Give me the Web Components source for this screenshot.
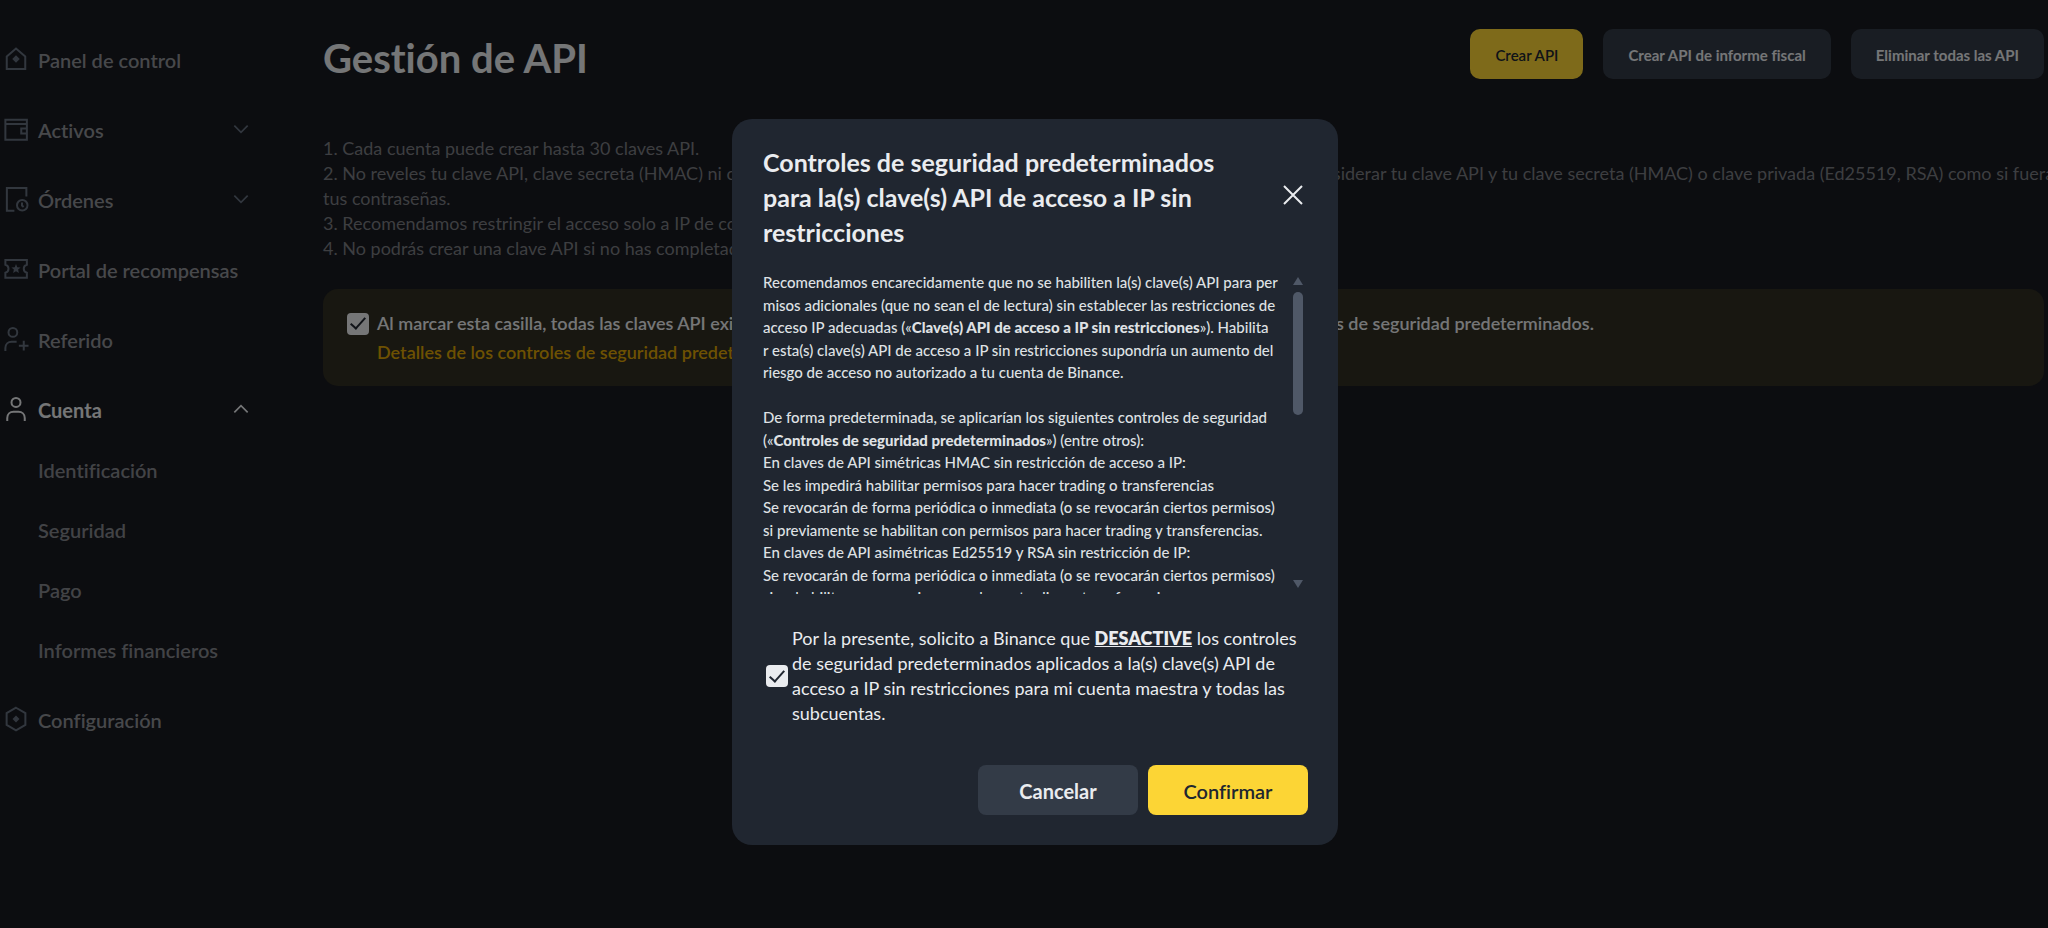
<!DOCTYPE html>
<html lang="es">
<head>
<meta charset="utf-8">
<meta name="viewport" content="width=device-width, initial-scale=1">
<title>Gestión de API</title>
<style>
    html, body {
        margin: 0;
        min-height: 100vh;
        background: #181a20;
        color: #eaecef;
        font-family: Lato, "Liberation Sans", sans-serif;
        font-variant-ligatures: none;
        overflow: hidden;
    }
    b { font-weight: 900; }
</style>
</head>
<body>
<api-page>
    <side-nav slot="nav">
        <nav-item icon="home">Panel de control</nav-item>
        <nav-item icon="wallet" arrow="down">Activos</nav-item>
        <nav-item icon="orders" arrow="down">Órdenes</nav-item>
        <nav-item icon="ticket">Portal de recompensas</nav-item>
        <nav-item icon="referral">Referido</nav-item>
        <nav-item icon="account" arrow="up" active>Cuenta
            <nav-item slot="sub" sub>Identificación</nav-item>
            <nav-item slot="sub" sub>Seguridad</nav-item>
            <nav-item slot="sub" sub>Pago</nav-item>
            <nav-item slot="sub" sub>Informes financieros</nav-item>
        </nav-item>
        <nav-item icon="settings">Configuración</nav-item>
    </side-nav>
    <page-header>Gestión de API
        <ui-button slot="actions" primary>Crear API</ui-button>
        <ui-button slot="actions">Crear API de informe fiscal</ui-button>
        <ui-button slot="actions">Eliminar todas las API</ui-button>
    </page-header>
    <api-notes></api-notes>
    <notice-banner>
        <check-field>Al marcar esta casilla, todas las claves API existentes y futuras de esta cuenta estarán siempre sujetas a todos los controles de seguridad predeterminados.</check-field>
        <a slot="link" href="#detalles">Detalles de los controles de seguridad predeterminados</a>
    </notice-banner>
</api-page>

<security-modal opened>
    <span slot="title">Controles de seguridad predeterminados<br>para la(s) clave(s) API de acceso a IP sin<br>restricciones</span>
    <scroll-box>
        Recomendamos encarecidamente que no se habiliten la(s) clave(s) API para per<br>
        misos adicionales (que no sean el de lectura) sin establecer las restricciones de<br>
        acceso IP adecuadas («<b>Clave(s) API de acceso a IP sin restricciones</b>»). Habilita<br>
        r esta(s) clave(s) API de acceso a IP sin restricciones supondría un aumento del<br>
        riesgo de acceso no autorizado a tu cuenta de Binance.<br>
        <br>
        De forma predeterminada, se aplicarían los siguientes controles de seguridad<br>
        («<b>Controles de seguridad predeterminados</b>») (entre otros):<br>
        En claves de API simétricas HMAC sin restricción de acceso a IP:<br>
        Se les impedirá habilitar permisos para hacer trading o transferencias<br>
        Se revocarán de forma periódica o inmediata (o se revocarán ciertos permisos)<br>
        si previamente se habilitan con permisos para hacer trading y transferencias.<br>
        En claves de API asimétricas Ed25519 y RSA sin restricción de IP:<br>
        Se revocarán de forma periódica o inmediata (o se revocarán ciertos permisos)<br>
        si se habilitan con permisos para hacer trading o transferencias.
    </scroll-box>
</security-modal>

<script>
const ICONS = {
    home: '<path d="M4.6 10 12 3.600l7.400 6.400V20H4.600z"/><path class="fill" d="m12 9 3 3-3 3-3-3z"/>',
    wallet: '<path d="M3.5 4.5h17.200v16H3.500zM3.500 8h17.200M20.700 11.500h-4.500v4h4.500"/>',
    orders: '<path d="M20.300 10V3.200H4.700v18.200h6"/><circle cx="17" cy="17" r="4.200"/><path d="M16.800 14.700v2.500l1.300 1.200"/>',
    ticket: '<path d="M3.500 4.800h17.200v3.800a3.300 3.300 0 0 0 0 6.400v4H3.500v-4a3.300 3.300 0 0 0 0-6.400z"/><path class="fill" d="m12 8 1 2.500 2.700.2-2 1.700.6 2.700-2.300-1.400-2.300 1.400.6-2.700-2-1.700 2.700-.2z"/>',
    referral: '<circle cx="9.500" cy="6.700" r="3.500"/><path d="M3.500 21.500v-2.300c0-3 2.200-5 5-5h4M14.300 17.300h7.700M18.200 13.400v7.800"/>',
    account: '<circle cx="12" cy="6.700" r="3.600"/><path d="M5 21.500v-2.300c0-3 2.200-5 5-5h4c2.800 0 5 2 5 5v2.300"/>',
    settings: '<path d="m12 3 7.500 4.300v9.400L12 21l-7.500-4.300V7.300z"/><path class="fill" d="m12 9.200 2.800 2.800-2.800 2.800-2.800-2.800z"/>',
    down: '<path d="m4 8 8 8 8-8"/>',
    up: '<path d="m4 16 8-8 8 8"/>'
};

function icon(name, cls) {
    return `<svg class="${cls}" viewBox="0 0 24 24" aria-hidden="true">${ICONS[name]}</svg>`;
}

class NavItem extends HTMLElement {
    constructor() {
        super();
        this.attachShadow({ mode: 'open' });
        const name = this.getAttribute('icon');
        const arrow = this.getAttribute('arrow');
        this.shadowRoot.innerHTML = `
        <style>
            :host {
                display: block;
                --label: #8f9196;
                --icon: #646e7d;
            }
            :host([active]) { --label: #eaecef; --icon: #eaecef; }
            :host([sub]) { --label: #85878d; }
            a {
                display: flex;
                align-items: center;
                gap: 7px;
                height: 60px;
                color: var(--label);
                font-size: 20px;
                font-weight: 600;
                text-decoration: none;
                white-space: nowrap;
            }
            :host([active]) > a { font-weight: 700; }
            :host([sub]) a { padding-left: 37px; }
            svg { fill: none; stroke: var(--icon); margin-bottom: 2px; }
            .icon { width: 30px; height: 30px; stroke-width: 1.6; }
            .arrow { width: 20px; height: 20px; stroke-width: 2; margin-left: auto; }
            .fill { fill: var(--icon); stroke: none; }
        </style>
        <a href="#">${name ? icon(name, 'icon') : ''}<span><slot></slot></span>${arrow ? icon(arrow, 'arrow') : ''}</a>
        <slot name="sub"></slot>
        `;
    }
}
customElements.define('nav-item', NavItem);

class SideNav extends HTMLElement {
    constructor() {
        super();
        this.attachShadow({ mode: 'open' });
        this.shadowRoot.innerHTML = `
        <style>
            :host { display: block; width: 250px; padding: 30px 0 0 1px; }
            nav { display: flex; flex-direction: column; gap: 10px; }
        </style>
        <nav><slot></slot></nav>
        `;
    }
}
customElements.define('side-nav', SideNav);

class UiButton extends HTMLElement {
    constructor() {
        super();
        this.attachShadow({ mode: 'open' });
        this.shadowRoot.innerHTML = `
        <style>
            :host { display: block; }
            button {
                width: 100%;
                height: 50px;
                padding: 2px 25px 0;
                border: 0;
                border-radius: 10px;
                background: #333b47;
                color: #eaecef;
                font: 700 15px Lato, "Liberation Sans", sans-serif;
                font-variant-ligatures: none;
                white-space: nowrap;
                cursor: pointer;
            }
            :host([primary]) button { background: #fcd535; color: #202630; font-weight: 600; }
            :host([large]) { width: 160px; }
            :host([large]) button { font-size: 20px; border-radius: 8px; }
        </style>
        <button type="button"><slot></slot></button>
        `;
    }
}
customElements.define('ui-button', UiButton);

class PageHeader extends HTMLElement {
    constructor() {
        super();
        this.attachShadow({ mode: 'open' });
        this.shadowRoot.innerHTML = `
        <style>
            :host { display: flex; justify-content: space-between; align-items: flex-start; }
            h1 { margin: 0; font-size: 40px; line-height: 58px; font-weight: 700; }
            div { display: flex; gap: 20px; }
        </style>
        <h1><slot></slot></h1>
        <div><slot name="actions"></slot></div>
        `;
    }
}
customElements.define('page-header', PageHeader);

class ApiNotes extends HTMLElement {
    constructor() {
        super();
        this.attachShadow({ mode: 'open' });
        this.shadowRoot.innerHTML = `
        <style>
            :host { display: block; margin-top: 49px; color: #7b7d82; font-size: 18px; line-height: 25px; white-space: nowrap; }
            p { margin: 0; }
        </style>
        <p>1. Cada cuenta puede crear hasta 30 claves API.</p>
        <p>2. No reveles tu clave API, clave secreta (HMAC) ni clave privada (Ed25519, RSA) a nadie y evita la pérdida de activos. Debes considerar tu clave API y tu clave secreta (HMAC) o clave privada (Ed25519, RSA) como si fueran<br>tus contraseñas.</p>
        <p>3. Recomendamos restringir el acceso solo a IP de confianza.</p>
        <p>4. No podrás crear una clave API si no has completado el KYC.</p>
        `;
    }
}
customElements.define('api-notes', ApiNotes);

class CheckField extends HTMLElement {
    constructor() {
        super();
        this.attachShadow({ mode: 'open' });
        this.shadowRoot.innerHTML = `
        <style>
            :host { display: block; }
            label { display: flex; align-items: center; gap: var(--gap, 8px); }
            /* the tick is painted by two borders of a turned box */
            input {
                appearance: none;
                flex: none;
                display: grid;
                place-items: center;
                width: 22px;
                height: 22px;
                margin: 0;
                border-radius: 4px;
                background: #eaecef;
            }
            input:checked::before {
                content: "";
                width: 6px;
                height: 13px;
                margin-bottom: 4px;
                border: solid #202630;
                border-width: 0 2px 2px 0;
                transform: rotate(42deg);
            }
        </style>
        <label><input type="checkbox" checked><span><slot></slot></span></label>
        `;
    }
}
customElements.define('check-field', CheckField);

class NoticeBanner extends HTMLElement {
    constructor() {
        super();
        this.attachShadow({ mode: 'open' });
        this.shadowRoot.innerHTML = `
        <style>
            :host {
                display: flex;
                flex-direction: column;
                gap: 4px;
                margin-top: 28px;
                padding: 22px 24px 21px;
                border-radius: 15px;
                background: #302e22;
                font-size: 18px;
                line-height: 25px;
                font-weight: 600;
                white-space: nowrap;
            }
            ::slotted(a) { margin-left: 30px; color: #dba204; text-decoration: none; }
        </style>
        <slot></slot>
        <slot name="link"></slot>
        `;
    }
}
customElements.define('notice-banner', NoticeBanner);

class ApiPage extends HTMLElement {
    constructor() {
        super();
        this.attachShadow({ mode: 'open' });
        this.shadowRoot.innerHTML = `
        <style>
            :host { display: flex; gap: 72px; }
            main { flex: 1; min-width: 0; padding: 29px 4px 0 0; }
        </style>
        <slot name="nav"></slot>
        <main><slot></slot></main>
        `;
    }
}
customElements.define('api-page', ApiPage);

class ScrollBox extends HTMLElement {
    constructor() {
        super();
        this.attachShadow({ mode: 'open' });
        this.shadowRoot.innerHTML = `
        <style>
            :host {
                display: flex;
                justify-content: space-between;
                height: 323px;
                padding-right: 5px;
                overflow: hidden;
                font-size: 15px;
                font-weight: 500;
                line-height: 1.5;
                color: #dfe1e4;
            }
            #text { white-space: nowrap; }
            #bar { display: flex; flex-direction: column; align-items: center; width: 10px; padding: 6px 0; }
            #thumb { width: 10px; height: 123px; margin: 7px 0 auto; border-radius: 5px; background: #4f5867; }
            svg { width: 10px; height: 8px; fill: #4f5867; }
        </style>
        <div id="text"><slot></slot></div>
        <div id="bar">
            <svg viewBox="0 0 10 8"><path d="M5 0 10 8H0z"/></svg>
            <div id="thumb"></div>
            <svg viewBox="0 0 10 8"><path d="M5 8 10 0H0z"/></svg>
        </div>
        `;
    }
}
customElements.define('scroll-box', ScrollBox);

class SecurityModal extends HTMLElement {
    constructor() {
        super();
        this.attachShadow({ mode: 'open' });
        this.shadowRoot.innerHTML = `
        <style>
            :host { display: none; }
            :host([opened]) {
                display: flex;
                align-items: center;
                justify-content: center;
                position: fixed;
                inset: 0;
                padding: 36px 0 0 22px;
                background: rgba(0,0,0,0.5);
                z-index: 10;
            }
            #modal {
                box-sizing: border-box;
                width: 606px;
                padding: 26px 30px 30px 31px;
                border-radius: 20px;
                background: #202630;
            }
            header { display: flex; align-items: center; justify-content: space-between; margin-bottom: 21px; }
            h2 { margin: 0; font-size: 25px; line-height: 35px; font-weight: 700; white-space: nowrap; }
            #close { display: flex; padding: 0; margin: 0 5px 6px 0; border: 0; background: none; cursor: pointer; }
            #close svg { width: 20px; height: 20px; fill: none; stroke: #eaecef; stroke-width: 2; }
            check-field {
                --gap: 4px;
                margin: 32px 0 39px;
                padding-left: 3px;
                font-size: 18px;
                line-height: 25px;
                white-space: nowrap;
            }
            b { font-weight: 800; }
            footer { display: flex; justify-content: flex-end; gap: 10px; }
        </style>
        <div id="modal" role="dialog" aria-modal="true">
            <header>
                <h2><slot name="title"></slot></h2>
                <button id="close" type="button" aria-label="Cerrar"><svg viewBox="0 0 20 20"><path d="m1 1 18 18M19 1 1 19"/></svg></button>
            </header>
            <slot></slot>
            <check-field>Por la presente, solicito a Binance que <b><u>DESACTIVE</u></b> los controles<br>de seguridad predeterminados aplicados a la(s) clave(s) API de<br>acceso a IP sin restricciones para mi cuenta maestra y todas las<br>subcuentas.</check-field>
            <footer>
                <ui-button large id="cancel">Cancelar</ui-button>
                <ui-button large primary id="confirm">Confirmar</ui-button>
            </footer>
        </div>
        `;
        const hide = () => this.removeAttribute('opened');
        this.shadowRoot.querySelector('#close').addEventListener('click', hide);
        this.shadowRoot.querySelector('#cancel').addEventListener('click', hide);
        this.shadowRoot.querySelector('#confirm').addEventListener('click', hide);
    }
}
customElements.define('security-modal', SecurityModal);
</script>
</body>
</html>
